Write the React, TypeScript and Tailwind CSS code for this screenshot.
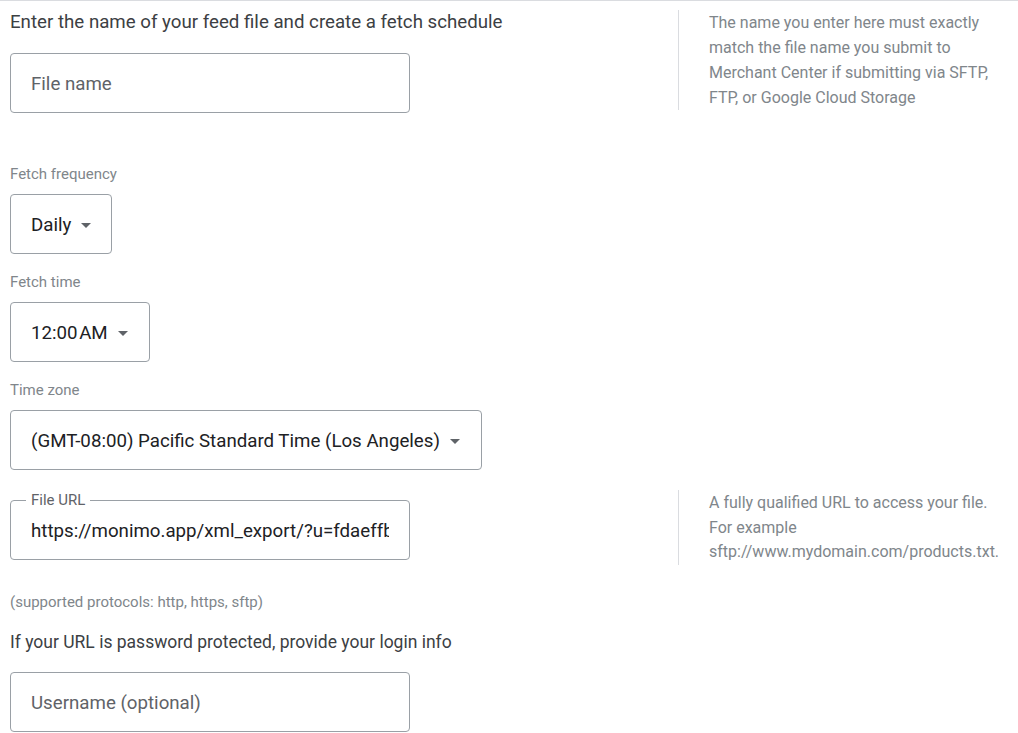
import type { ReactNode } from 'react'

const FONT = { fontFamily: 'Roboto, "Noto Sans", sans-serif' }

function Caret() {
  return (
    <svg width="10" height="5" viewBox="0 0 10 5" className="shrink-0">
      <path d="M0 0h10L5 5z" fill="#5f6368" />
    </svg>
  )
}

function Field({ children, width = 'w-[400px]' }: { children: ReactNode; width?: string }) {
  return (
    <div
      className={`${width} h-[60px] rounded-[4px] border border-[#9aa0a6] flex items-center px-5 pt-[3px] text-[18.7px] text-[#3c4043]`}
    >
      {children}
    </div>
  )
}

function Select({ children, width }: { children: ReactNode; width: string }) {
  return (
    <div
      className={`${width} h-[60px] rounded-[4px] border border-[#9aa0a6] flex items-center gap-[10px] pl-5 pt-[3px] text-[18.7px] text-[#202124]`}
    >
      <span className="whitespace-nowrap">{children}</span>
      <Caret />
    </div>
  )
}

function Label({ children }: { children: ReactNode }) {
  return <div className="text-[15px] leading-5 text-[#80868b]">{children}</div>
}

function Help({ children }: { children: ReactNode }) {
  return (
    <div className="ml-[268px] border-l border-[#dadce0] pl-[30px] text-[16px] text-[#80868b] w-[332px]">
      {children}
    </div>
  )
}

export default function App() {
  return (
    <div className="w-[1018px] h-[733px] overflow-hidden bg-white border-t border-[#dadce0]" style={FONT}>
      <div className="pl-[10px]">
        {/* file name row */}
        <div className="flex">
          <div className="w-[400px] shrink-0">
            <div className="pt-[9px] text-[18.7px] leading-6 text-[#3c4043] whitespace-nowrap">
              Enter the name of your feed file and create a fetch schedule
            </div>
            <div className="mt-[19px]">
              <Field>
                <span className="text-[#5f6368]">File name</span>
              </Field>
            </div>
          </div>
          <div className="pt-[9px]">
            <Help>
              <div className="leading-[25px]">
                The name you enter here must exactly match the file name you submit to Merchant Center if submitting via
                SFTP, FTP, or Google Cloud Storage
              </div>
            </Help>
          </div>
        </div>

        {/* schedule */}
        <div className="mt-[51px]">
          <Label>Fetch frequency</Label>
          <div className="mt-[10px]">
            <Select width="w-[102px]">Daily</Select>
          </div>
        </div>
        <div className="mt-[18px]">
          <Label>Fetch time</Label>
          <div className="mt-[10px]">
            <Select width="w-[140px]">
              <span className="[word-spacing:-3px]">12:00 AM</span>
            </Select>
          </div>
        </div>
        <div className="mt-[18px]">
          <Label>Time zone</Label>
          <div className="mt-[10px]">
            <Select width="w-[472px]">(GMT-08:00) Pacific Standard Time (Los Angeles)</Select>
          </div>
        </div>

        {/* file url row */}
        <div className="flex mt-[20px]">
          <div className="w-[400px] shrink-0 pt-[10px]">
            <div className="relative">
              <Field>
                <span className="whitespace-nowrap overflow-hidden text-[#202124]">
                  https://monimo.app/xml_export/?u=fdaeffbd
                </span>
              </Field>
              <span className="absolute left-[16px] -top-[10px] bg-white px-[5px] text-[15px] leading-5 text-[#5f6368]">
                File URL
              </span>
            </div>
          </div>
          <div>
            <Help>
              <div className="leading-[24.5px] pt-[1px]">
                A fully qualified URL to access your file. For example sftp://www.mydomain.com/products.txt.
              </div>
            </Help>
          </div>
        </div>

        <div className="mt-[27px] text-[15px] leading-5 text-[#80868b]">(supported protocols: http, https, sftp)</div>
        <div className="mt-[18px] text-[17.5px] leading-6 text-[#3c4043]">
          If your URL is password protected, provide your login info
        </div>
        <div className="mt-[18px]">
          <Field>
            <span className="text-[#5f6368]">Username (optional)</span>
          </Field>
        </div>
      </div>
    </div>
  )
}
